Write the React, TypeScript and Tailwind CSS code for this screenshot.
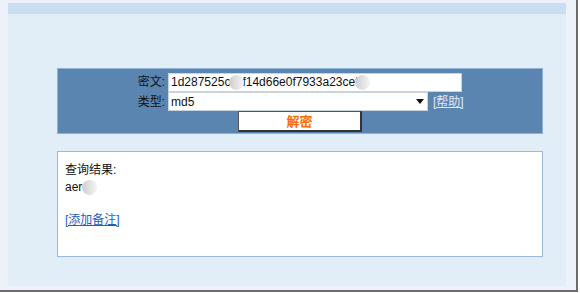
import React from 'react'

const font = { fontFamily: '"Liberation Sans", "Noto Sans CJK SC", Arial, sans-serif' }

// blurred privacy blob over the text
function Blob({ className = '' }: { className?: string }) {
    return (
        <span
            className={`inline-block w-[15px] h-[15px] rounded-full bg-gradient-to-r from-[#cfcfcf] to-[#f4f4f4] blur-[0.6px] align-middle ${className}`}
        />
    )
}

export default function App() {
    return (
        <div className="w-[580px] h-[293px] bg-white" style={font}>
            <div className="w-[578px] h-[292px] bg-[#edf1f9] border-r-2 border-b-2 border-[#6b6b6b] pl-[8px] pt-[3px]">
                <div className="w-[558px] h-[283px] bg-[#e1edf7] flex flex-col">
                    {/* top strip */}
                    <div className="h-[11px] bg-[#c9dff0]" />

                    <div className="pl-[49px] pt-[54px] flex flex-col">
                        {/* decrypt form */}
                        <div className="w-[486px] h-[66px] bg-[#5b85b1] border border-[#8fb1d2] pt-[3px] flex flex-col text-[12px] text-[#111]">
                            <div className="flex items-center h-[20px]">
                                <span className="w-[110px] text-right pr-[3px]">密文:</span>
                                <div className="w-[294px] h-[19px] bg-white border border-[#c7d3e0] flex items-center pl-[2px] overflow-hidden whitespace-nowrap text-[12px] text-[#111]">
                                    <span>1d287525c</span>
                                    <Blob className="-ml-[1px] mr-[-2px]" />
                                    <span>f14d66e0f7933a23ce</span>
                                    <span>f</span>
                                    <Blob className="-ml-[4px]" />
                                </div>
                            </div>
                            <div className="flex items-center h-[19px]">
                                <span className="w-[110px] text-right pr-[3px]">类型:</span>
                                <div className="w-[260px] h-[19px] bg-white border border-[#c7d3e0] flex items-center justify-between pl-[2px] pr-[3px]">
                                    <span>md5</span>
                                    <svg width="8" height="5" viewBox="0 0 8 5">
                                        <path d="M0 0 L8 0 L4 5 Z" fill="#111" />
                                    </svg>
                                </div>
                                <a className="ml-[5px] text-[#e3e8f4] underline">[帮助]</a>
                            </div>
                            <div className="flex h-[22px]">
                                <button className="ml-[180px] w-[124px] h-[21px] bg-white border border-[#555] border-r-2 border-b-2 border-r-[#333] border-b-[#333] text-[13px] font-bold text-[#ff6a00] leading-none">
                                    解密
                                </button>
                            </div>
                        </div>

                        {/* result */}
                        <div className="mt-[17px] w-[486px] h-[106px] bg-white border border-[#9ab8d8] pl-[7px] pt-[10px] text-[12px] text-[#111] leading-[17px] flex flex-col">
                            <span>查询结果:</span>
                            <span className="flex items-center">
                                aer
                                <Blob />
                            </span>
                            <span className="h-[16px]" />
                            <a className="text-[#1a5fc0] underline w-fit">[添加备注]</a>
                        </div>
                    </div>
                </div>
            </div>
        </div>
    )
}
